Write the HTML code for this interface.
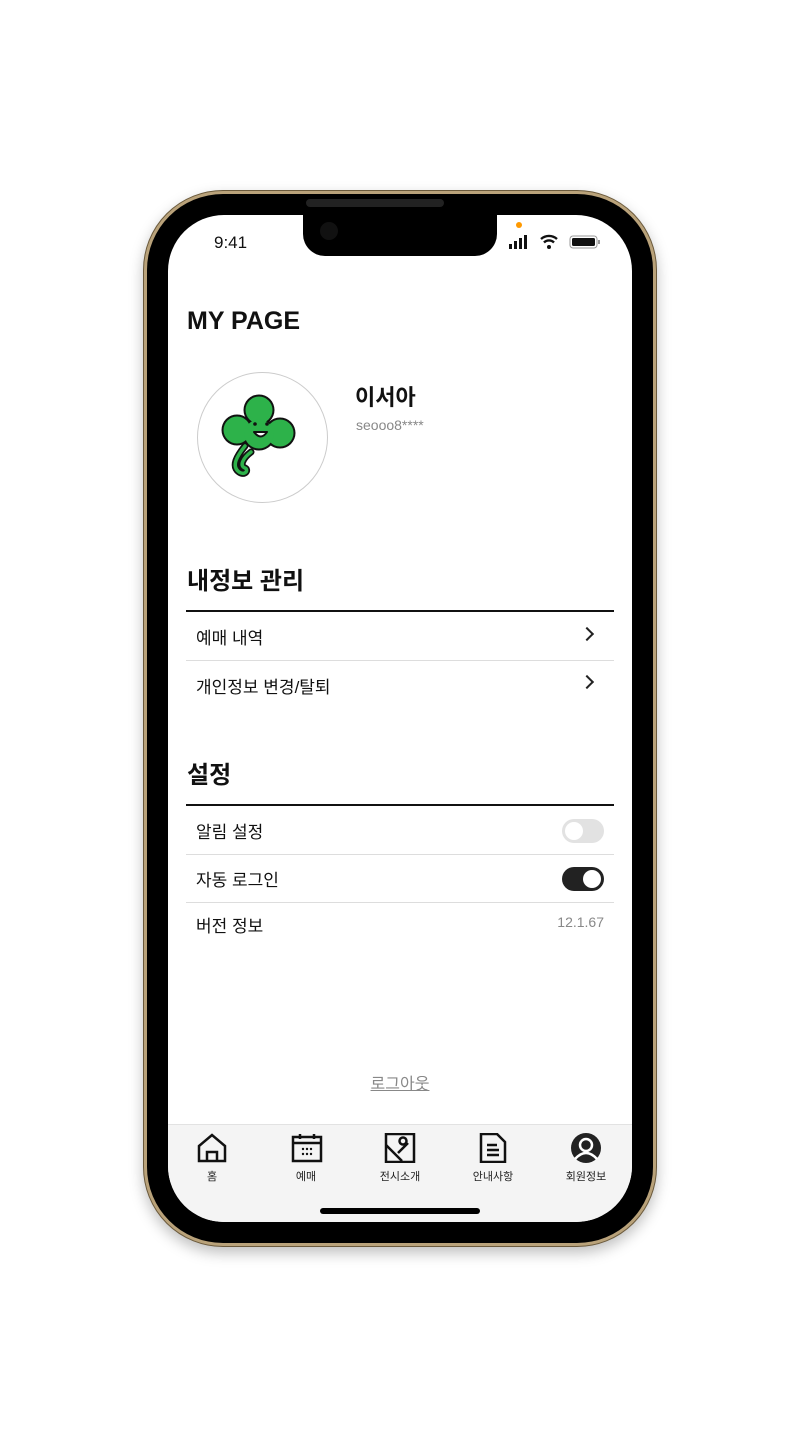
<!DOCTYPE html>
<html><head><meta charset="utf-8"><style>
*{margin:0;padding:0;box-sizing:border-box}
body{width:800px;height:1455px;background:#fff;position:relative;overflow:hidden;font-family:"Liberation Sans","Noto Sans CJK KR",sans-serif;color:#111}
.a{position:absolute}
.frame{left:143px;top:190px;width:514px;height:1057px;border-radius:80px;background:#b9a27a;box-shadow:0 6px 14px rgba(0,0,0,.25);border:1px solid #6b5a3c}
.bezel{left:147px;top:194px;width:506px;height:1049px;border-radius:76px;background:#000}
.screen{left:168px;top:215px;width:464px;height:1007px;border-radius:56px;background:#fff;overflow:hidden}
.notch{left:303px;top:215px;width:194px;height:41px;background:#000;border-radius:0 0 22px 22px}
.row{left:196px;font-size:17px}
.hr{left:186px;width:428px;height:1px;background:#ddd}
.hb{left:186px;width:428px;height:2px;background:#111}
.chev{left:582px;width:10px;height:10px;border-right:2px solid #222;border-top:2px solid #222;transform:rotate(45deg)}
.nav{font-size:11px;color:#222;text-align:center;width:80px}
</style></head><body>
<div class="a frame"></div>
<div class="a bezel"></div>
<div class="a screen">
 <div class="a" style="left:0;top:909px;width:464px;height:98px;background:#f4f4f4;border-top:1px solid #e2e2e2"></div>
</div>
<div class="a notch"></div>
<div class="a" style="left:320px;top:222px;width:18px;height:18px;border-radius:50%;background:#111"></div>
<div class="a" style="left:306px;top:199px;width:138px;height:8px;border-radius:4px;background:#222"></div>
<div class="a" style="left:516px;top:222px;width:6px;height:6px;border-radius:50%;background:#f90"></div>
<div class="a" style="left:214px;top:233px;font-size:17px">9:41</div>
<svg class="a" style="left:508px;top:233px" width="96" height="18">
 <rect x="1" y="11" width="3" height="5" fill="#111"/><rect x="6" y="8" width="3" height="8" fill="#111"/><rect x="11" y="5" width="3" height="11" fill="#111"/><rect x="16" y="2" width="3" height="14" fill="#111"/>
 <path d="M33 6a12 12 0 0 1 16 0M36 9.5a7 7 0 0 1 10 0" stroke="#111" stroke-width="2.4" fill="none"/><circle cx="41" cy="14" r="2" fill="#111"/>
 <rect x="62" y="3" width="27" height="12" rx="3" fill="none" stroke="#999"/><rect x="64" y="5" width="23" height="8" rx="1.5" fill="#111"/><rect x="90" y="7" width="2" height="4" fill="#999"/>
</svg>
<div class="a" style="left:187px;top:307px;font-size:25px;font-weight:bold">MY PAGE</div>
<div class="a" style="left:197px;top:372px;width:131px;height:131px;border-radius:50%;border:1.5px solid #ccc"></div>
<svg class="a" style="left:215px;top:388px" width="95" height="95" viewBox="0 0 95 95">
 <g stroke-linejoin="round" stroke-linecap="round">
 <g stroke="#fff" stroke-width="12" fill="#fff"><circle cx="44" cy="22" r="15"/><circle cx="22" cy="42" r="15"/><circle cx="65" cy="45" r="15"/><circle cx="44" cy="46" r="16"/><path d="M30 58c-8 10-14 20-6 26 6 4 10-2 6-4-6-2-2-10 6-16" fill="none"/></g>
 <path d="M30 58c-8 10-14 20-6 26 6 4 10-2 6-4-6-2-2-10 6-16" fill="none" stroke="#111" stroke-width="7"/>
 <path d="M30 58c-8 10-14 20-6 26 6 4 10-2 6-4-6-2-2-10 6-16" fill="none" stroke="#2db24a" stroke-width="3.5"/>
 <g fill="#111"><circle cx="44" cy="22" r="15.5"/><circle cx="22" cy="42" r="15.5"/><circle cx="65" cy="45" r="15.5"/><circle cx="44" cy="46" r="16.5"/></g>
 <g fill="#2db24a"><circle cx="44" cy="22" r="13.5"/><circle cx="22" cy="42" r="13.5"/><circle cx="65" cy="45" r="13.5"/><circle cx="44" cy="46" r="14.5"/></g>
 </g>
 <circle cx="40" cy="36" r="1.8" fill="#111"/><circle cx="52" cy="36" r="1.8" fill="#111"/>
 <path d="M39 44q7 9 13 0z" fill="#fff" stroke="#111" stroke-width="2" stroke-linejoin="round"/>
</svg>
<div class="a" style="left:355px;top:380px;font-size:22px;font-weight:bold">이서아</div>
<div class="a" style="left:356px;top:417px;font-size:14px;color:#888">seooo8****</div>
<div class="a" style="left:187px;top:561px;font-size:24px;font-weight:bold">내정보 관리</div>
<div class="a hb" style="top:610px"></div>
<div class="a row" style="top:624px">예매 내역</div><div class="a chev" style="top:629px"></div>
<div class="a hr" style="top:660px"></div>
<div class="a row" style="top:673px">개인정보 변경/탈퇴</div><div class="a chev" style="top:677px"></div>
<div class="a" style="left:187px;top:755px;font-size:24px;font-weight:bold">설정</div>
<div class="a hb" style="top:804px"></div>
<div class="a row" style="top:818px">알림 설정</div>
<div class="a" style="left:562px;top:819px;width:42px;height:24px;border-radius:12px;background:#e2e2e2"></div>
<div class="a" style="left:565px;top:822px;width:18px;height:18px;border-radius:50%;background:#fff"></div>
<div class="a hr" style="top:854px"></div>
<div class="a row" style="top:866px">자동 로그인</div>
<div class="a" style="left:562px;top:867px;width:42px;height:24px;border-radius:12px;background:#222"></div>
<div class="a" style="left:583px;top:870px;width:18px;height:18px;border-radius:50%;background:#fff"></div>
<div class="a hr" style="top:902px"></div>
<div class="a row" style="top:912px">버전 정보</div>
<div class="a" style="left:540px;top:914px;width:64px;text-align:right;font-size:14px;color:#888">12.1.67</div>
<div class="a" style="left:350px;top:1070px;width:100px;text-align:center;font-size:16px;color:#888;text-decoration:underline">로그아웃</div>
<svg class="a" style="left:196px;top:1133px" width="32" height="30" fill="none" stroke="#111" stroke-width="2.5"><path d="M3 13L16 2 29 13V28H3Z"/><path d="M11 28V19H21V28"/></svg>
<svg class="a" style="left:291px;top:1133px" width="32" height="30" fill="none" stroke="#111" stroke-width="2.5"><rect x="2" y="4" width="28" height="24"/><path d="M2 10H30M9 1V6M23 1V6"/><g fill="#111" stroke="none"><circle cx="12" cy="16" r="1.2"/><circle cx="16" cy="16" r="1.2"/><circle cx="20" cy="16" r="1.2"/><circle cx="12" cy="21" r="1.2"/><circle cx="16" cy="21" r="1.2"/><circle cx="20" cy="21" r="1.2"/></g></svg>
<svg class="a" style="left:384px;top:1133px" width="32" height="30" fill="none" stroke="#111" stroke-width="2.5"><rect x="2" y="1" width="28" height="28"/><path d="M2 12L18 28M14 20L24 10"/><circle cx="19" cy="8" r="3.5"/></svg>
<svg class="a" style="left:478px;top:1133px" width="30" height="30" fill="none" stroke="#111" stroke-width="2.5"><path d="M3 1H19L27 9V29H3Z"/><path d="M9 12H19M9 17H21M9 22H21"/></svg>
<svg class="a" style="left:570px;top:1133px" width="32" height="32"><circle cx="16" cy="15" r="15" fill="#222"/><circle cx="16" cy="12" r="6" fill="none" stroke="#fff" stroke-width="2.5"/><path d="M5 26q11-12 22 0" fill="none" stroke="#fff" stroke-width="2.5"/></svg>
<div class="a nav" style="left:172px;top:1168px">홈</div>
<div class="a nav" style="left:266px;top:1168px">예매</div>
<div class="a nav" style="left:360px;top:1168px">전시소개</div>
<div class="a nav" style="left:453px;top:1168px">안내사항</div>
<div class="a nav" style="left:546px;top:1168px">회원정보</div>
<div class="a" style="left:320px;top:1208px;width:160px;height:6px;border-radius:3px;background:#000"></div>
</body></html>
